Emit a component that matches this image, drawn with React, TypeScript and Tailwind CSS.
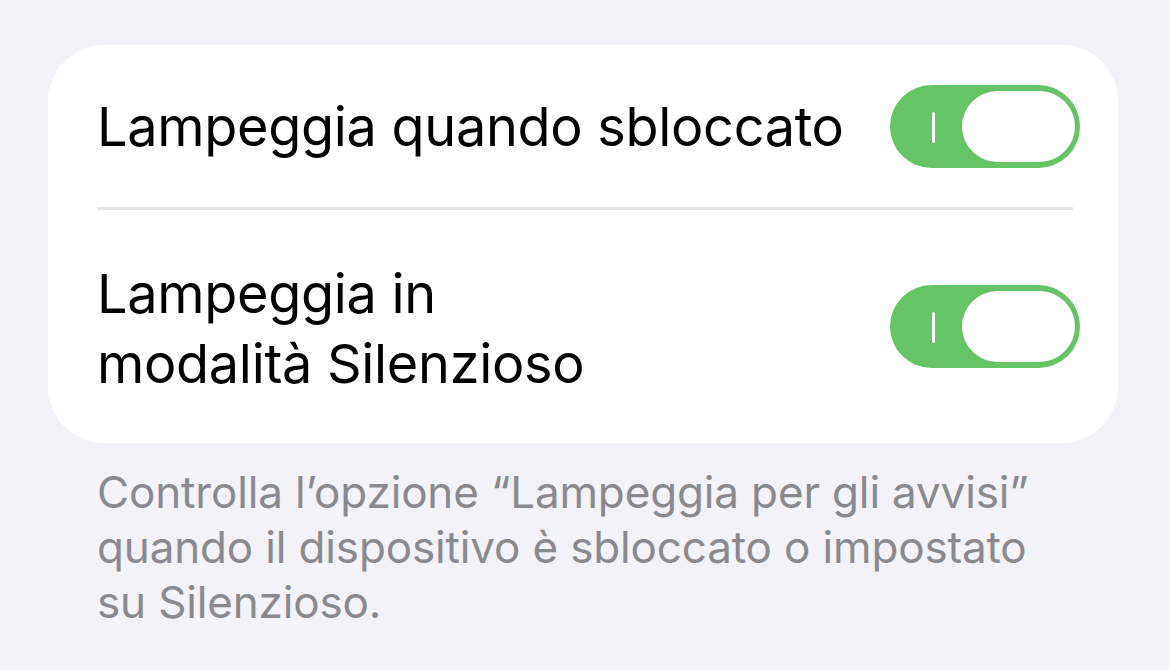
import React from "react";

function Toggle() {
  return (
    <div className="relative w-[190px] h-[83px] rounded-full bg-[#65c466] shrink-0">
      <div className="absolute left-[42px] top-[27px] w-[3px] h-[31px] bg-white rounded-sm" />
      <div className="absolute right-[5px] top-[6px] w-[113px] h-[71px] rounded-full bg-white" />
    </div>
  );
}

export default function App() {
  return (
    <div
      className="w-[1170px] h-[670px] bg-[#f2f2f7] pt-[45px] pl-[48px]"
      style={{ fontFamily: "Inter, 'Noto Sans', sans-serif" }}
    >
      <div className="w-[1070px] h-[398px] bg-white rounded-[56px] flex flex-col pl-[49px] pr-[38px]">
        <div className="h-[162px] flex items-center justify-between">
          <span className="text-[54px] leading-[70px] text-black tracking-[-0.3px] pt-[2px]">Lampeggia quando sbloccato</span>
          <Toggle />
        </div>
        <div className="h-[3px] bg-[#e5e5ea] mr-[7px]" />
        <div className="flex-1 flex items-center justify-between">
          <span className="text-[54px] leading-[70px] text-black tracking-[-0.3px] pt-[4px]">
            Lampeggia in
            <br />
            modalità Silenzioso
          </span>
          <Toggle />
        </div>
      </div>
      <div className="pl-[49px] pt-[22px] text-[44px] leading-[55px] text-[#8a8a8e] tracking-[-0.15px]">
        Controlla l’opzione “Lampeggia per gli avvisi”
        <br />
        quando il dispositivo è sbloccato o impostato
        <br />
        su Silenzioso.
      </div>
    </div>
  );
}
